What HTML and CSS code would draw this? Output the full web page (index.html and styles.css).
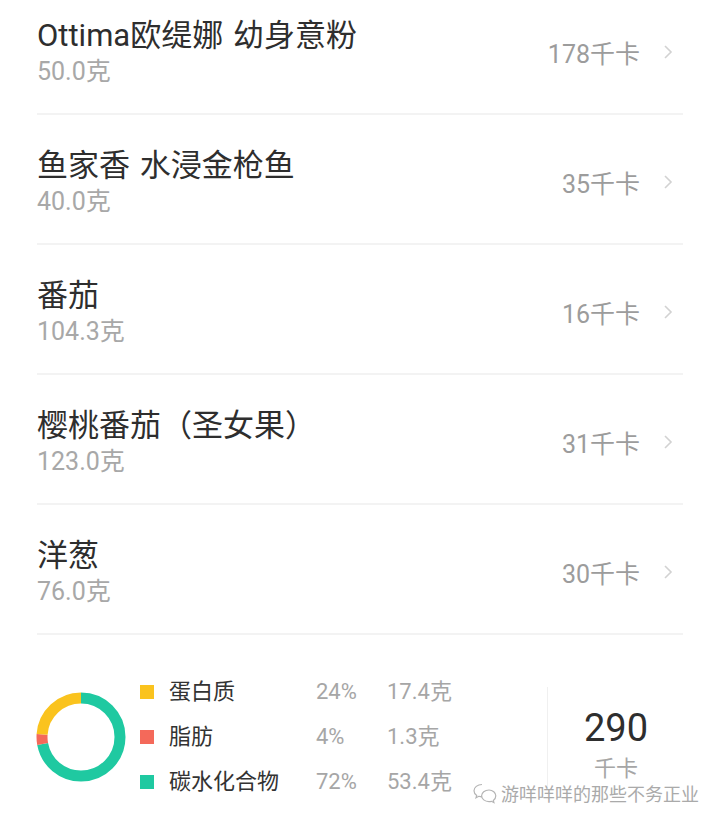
FILE: index.html
```html
<!DOCTYPE html>
<html lang="zh-CN">
<head>
  <meta charset="UTF-8">
  <meta name="viewport" content="width=device-width, initial-scale=1.0">
  <title>饮食记录</title>
  <link rel="stylesheet" href="styles.css">
</head>
<body>

<div class="page">
  <!-- Food list -->
  <ul class="food-list">
    <li class="food-item">
      <div class="food-info">
        <div class="food-name">Ottima欧缇娜 幼身意粉</div>
        <div class="food-weight">50.0克</div>
      </div>
      <div class="food-kcal">178千卡</div>
      <svg class="chevron" width="12" height="16" viewBox="0 0 12 16"><polyline points="3,2 9,8 3,14"></polyline></svg>
    </li>
    <li class="food-item">
      <div class="food-info">
        <div class="food-name">鱼家香 水浸金枪鱼</div>
        <div class="food-weight">40.0克</div>
      </div>
      <div class="food-kcal">35千卡</div>
      <svg class="chevron" width="12" height="16" viewBox="0 0 12 16"><polyline points="3,2 9,8 3,14"></polyline></svg>
    </li>
    <li class="food-item">
      <div class="food-info">
        <div class="food-name">番茄</div>
        <div class="food-weight">104.3克</div>
      </div>
      <div class="food-kcal">16千卡</div>
      <svg class="chevron" width="12" height="16" viewBox="0 0 12 16"><polyline points="3,2 9,8 3,14"></polyline></svg>
    </li>
    <li class="food-item">
      <div class="food-info">
        <div class="food-name">樱桃番茄（圣女果）</div>
        <div class="food-weight">123.0克</div>
      </div>
      <div class="food-kcal">31千卡</div>
      <svg class="chevron" width="12" height="16" viewBox="0 0 12 16"><polyline points="3,2 9,8 3,14"></polyline></svg>
    </li>
    <li class="food-item">
      <div class="food-info">
        <div class="food-name">洋葱</div>
        <div class="food-weight">76.0克</div>
      </div>
      <div class="food-kcal">30千卡</div>
      <svg class="chevron" width="12" height="16" viewBox="0 0 12 16"><polyline points="3,2 9,8 3,14"></polyline></svg>
    </li>
  </ul>

  <!-- Nutrition summary -->
  <div class="summary">
    <svg class="donut" width="90" height="90" viewBox="0 0 90 90">
      <!-- circumference of r=39 is 245.04 -->
      <g transform="rotate(-90 45 45)" fill="none" stroke-width="11">
        <circle cx="45" cy="45" r="39" stroke="#1fc9a1" stroke-dasharray="176.4 245.04" stroke-dashoffset="0"></circle>
        <circle cx="45" cy="45" r="39" stroke="#f4695a" stroke-dasharray="9.8 245.04" stroke-dashoffset="-176.4"></circle>
        <circle cx="45" cy="45" r="39" stroke="#fac31e" stroke-dasharray="58.84 245.04" stroke-dashoffset="-186.2"></circle>
      </g>
    </svg>

    <div class="legend">
      <span class="dot dot-protein"></span>
      <span class="legend-name">蛋白质</span>
      <span class="legend-pct">24%</span>
      <span class="legend-gram">17.4克</span>

      <span class="dot dot-fat"></span>
      <span class="legend-name">脂肪</span>
      <span class="legend-pct">4%</span>
      <span class="legend-gram">1.3克</span>

      <span class="dot dot-carb"></span>
      <span class="legend-name">碳水化合物</span>
      <span class="legend-pct">72%</span>
      <span class="legend-gram">53.4克</span>
    </div>

    <div class="total">
      <div class="total-num">290</div>
      <div class="total-unit">千卡</div>
    </div>
  </div>

  <!-- Watermark -->
  <div class="watermark">
    <svg width="26" height="22" viewBox="0 0 26 22">
      <g fill="none" stroke="#b4b4b4" stroke-width="1.2">
        <path d="M10 2.5c-4.6 0-8 2.9-8 6.3 0 1.9 1 3.5 2.7 4.6l-.7 2.4 2.8-1.5c1 .3 2.1.5 3.2.5"></path>
        <path d="M17 8c-4.2 0-7.4 2.6-7.4 5.8s3.2 5.8 7.4 5.8c.9 0 1.7-.1 2.4-.3l2.5 1.3-.6-2.1c1.6-1.1 2.5-2.7 2.5-4.7 0-3.2-3.1-5.8-6.8-5.8z"></path>
      </g>
    </svg>
    <span>游咩咩咩的那些不务正业</span>
  </div>
</div>

</body>
</html>
```

FILE: styles.css
```css
/* Base */
body {
  margin: 0;
  background-color: #fff;
  font-family: Roboto, "Noto Sans CJK SC", sans-serif;
}
.page {
  position: relative;
  width: 720px;
  height: 826px;
  overflow: hidden;
}

/* Food list (scrolled a little) */
.food-list {
  list-style: none;
  margin: -15px 0 0 0;
  padding: 0 37px;
}
.food-item {
  display: flex;
  align-items: center;
  height: 128px;
  border-bottom: 2px solid #f3f3f3;
}
.food-info {
  flex: 1;
  padding-top: 10px;
}
.food-name {
  font-size: 31px;
  line-height: 36px;
  color: #2e2e2e;
  word-spacing: 2px;
}
.food-weight {
  font-size: 25px;
  line-height: 36px;
  color: #a8a8a8;
}
.food-kcal {
  font-size: 25px;
  color: #9c9c9c;
  padding-top: 6px;
}
.chevron {
  margin: 6px 9px 0 22px;
  fill: none;
  stroke: #d2d2d2;
  stroke-width: 1.6;
}

/* Summary */
.summary {
  display: flex;
  align-items: center;
  padding: 43px 0 0 36px;
}
.donut {
  flex: none;
}
.legend {
  display: grid;
  grid-template-columns: 14px 162px 71px 160px;
  align-items: center;
  row-gap: 18px;
  margin-left: 14px;
  font-size: 22px;
  line-height: 27px;
}
.dot {
  width: 14px;
  height: 14px;
}
.dot-protein { background-color: #fac31e; }
.dot-fat { background-color: #f4695a; }
.dot-carb { background-color: #1fc9a1; }
.legend-name {
  color: #333;
  padding-left: 15px;
}
.legend-pct, .legend-gram {
  color: #a6a6a6;
}
.total {
  border-left: 1px solid #f0f0f0;
  width: 136px;
  padding: 18px 0 0;
  text-align: center;
}
.total-num {
  font-size: 38px;
  line-height: 46px;
  color: #2e2e2e;
}
.total-unit {
  font-size: 22px;
  line-height: 36px;
  color: #a6a6a6;
}

/* Watermark overlay */
.watermark {
  position: absolute;
  left: 472px;
  top: 780px;
  display: flex;
  align-items: center;
  gap: 3px;
  font-size: 18px;
  color: #aaa;
  text-shadow: 0 0 1px #fff, 1px 1px 0 #fff;
}
```
